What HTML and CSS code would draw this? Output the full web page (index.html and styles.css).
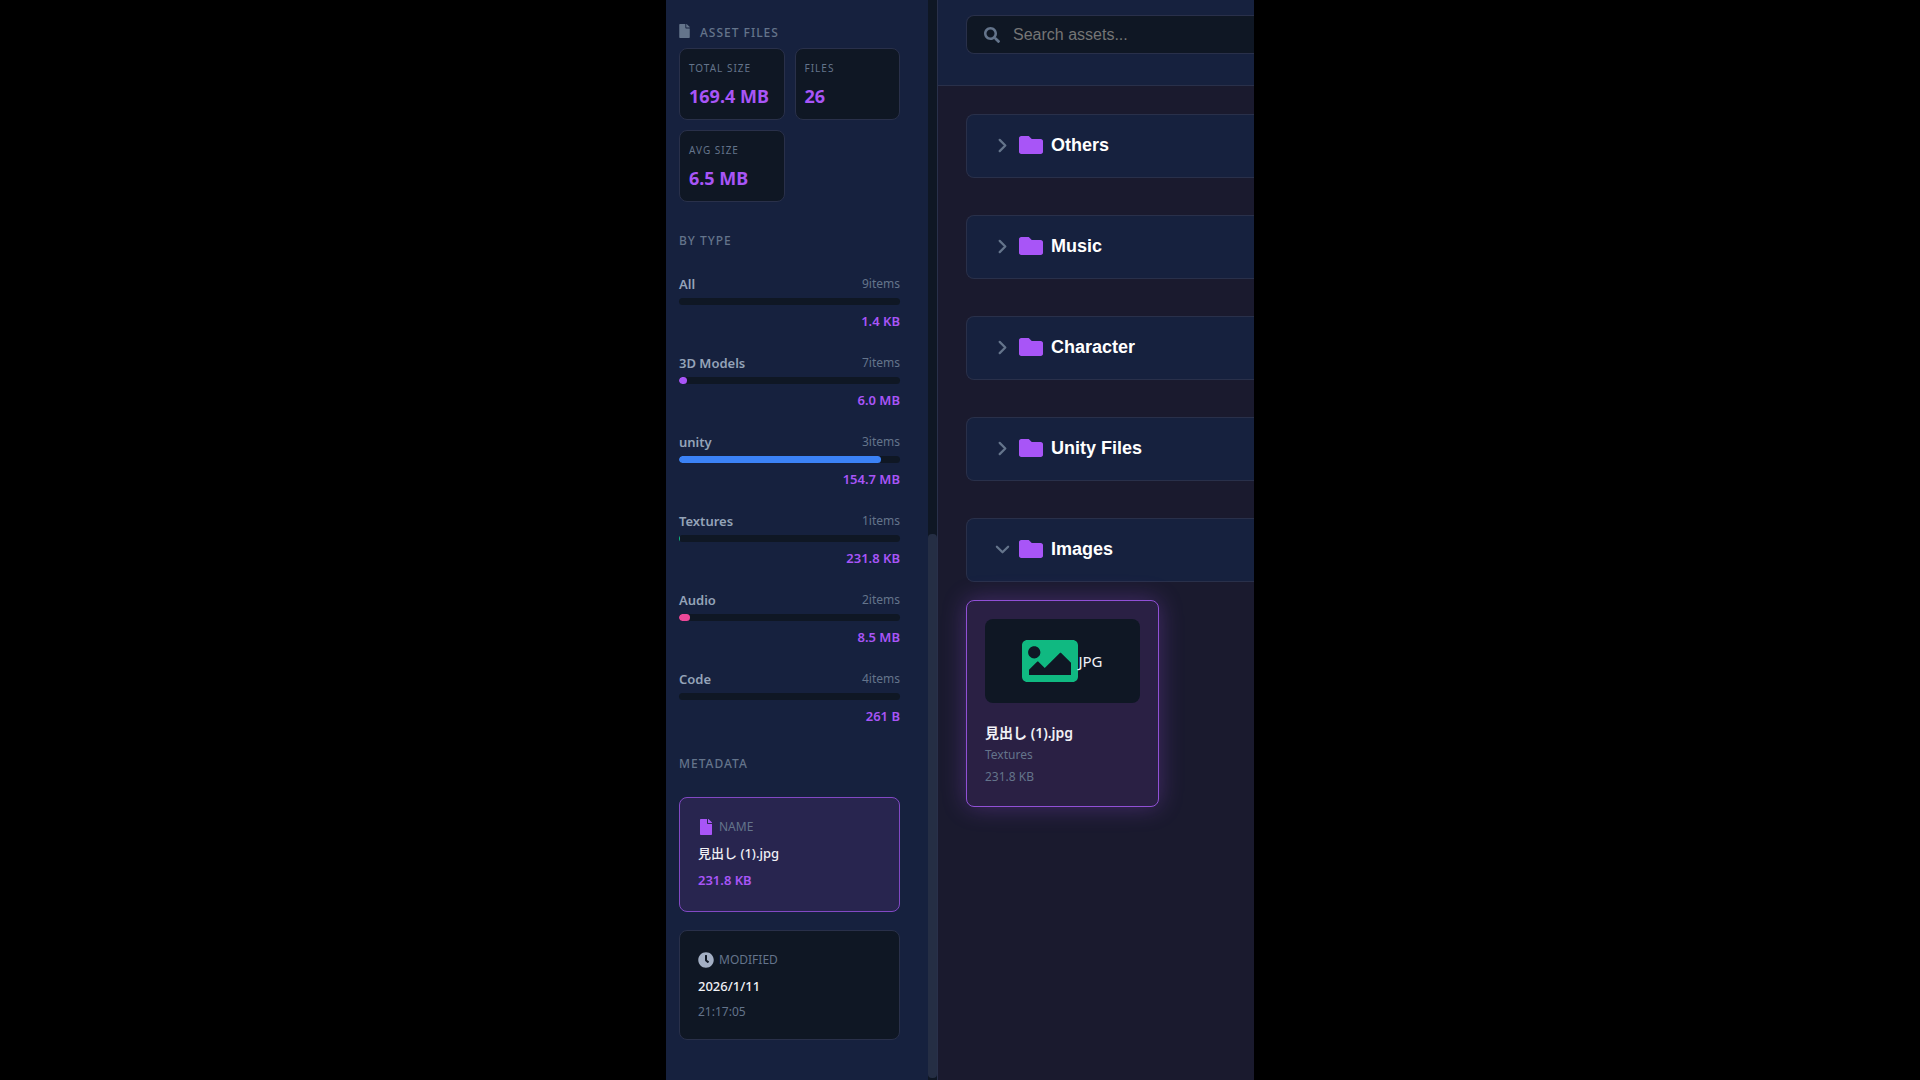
FILE: index.html
```html
<!DOCTYPE html>
<html lang="en">
<head>
<meta charset="utf-8">
<meta name="viewport" content="width=device-width, initial-scale=1">
<title>Asset Library</title>
<link rel="stylesheet" href="styles.css">
</head>
<body>
<svg class="sprite" aria-hidden="true">
  <symbol id="file" viewBox="0 0 384 512"><path d="M224 136V0H24C10.700 0 0 10.700 0 24v464c0 13.300 10.700 24 24 24h336c13.300 0 24-10.700 24-24V160H248c-13.200 0-24-10.800-24-24zm160-14.100v6.100H256V0h6.100c6.400 0 12.500 2.500 17 7l97.900 98c4.500 4.500 7 10.600 7 16.900z"/></symbol>
  <symbol id="clock" viewBox="0 0 512 512"><path d="M256,8C119,8,8,119,8,256S119,504,256,504,504,393,504,256,393,8,256,8Zm92.490,313h0l-20,25a16,16,0,0,1-22.490,2.500h0l-67-49.720a40,40,0,0,1-15-31.230V112a16,16,0,0,1,16-16h32a16,16,0,0,1,16,16V256l58,42.500A16,16,0,0,1,348.490,321Z"/></symbol>
  <symbol id="search" viewBox="0 0 512 512"><path d="M505 442.700L405.300 343c-4.500-4.500-10.600-7-17-7H372c27.600-35.300 44-79.700 44-128C416 93.100 322.900 0 208 0S0 93.100 0 208s93.100 208 208 208c48.300 0 92.700-16.400 128-44v16.300c0 6.400 2.500 12.500 7 17l99.700 99.700c9.400 9.400 24.600 9.400 33.900 0l28.300-28.300c9.400-9.400 9.400-24.600.1-34zM208 336c-70.700 0-128-57.200-128-128 0-70.700 57.200-128 128-128 70.700 0 128 57.200 128 128 0 70.700-57.200 128-128 128z"/></symbol>
  <symbol id="folder" viewBox="0 64 512 384"><path d="M464 128H272l-64-64H48C21.490 64 0 85.490 0 112v288c0 26.510 21.490 48 48 48h416c26.510 0 48-21.490 48-48V176c0-26.510-21.490-48-48-48z"/></symbol>
  <symbol id="image" viewBox="0 64 512 384"><path d="M464 448H48c-26.510 0-48-21.490-48-48V112c0-26.510 21.490-48 48-48h416c26.510 0 48 21.490 48 48v288c0 26.510-21.490 48-48 48zM112 120c-30.928 0-56 25.072-56 56s25.072 56 56 56 56-25.072 56-56-25.072-56-56-56zM64 384h384V272l-87.515-87.515c-4.686-4.686-12.284-4.686-16.971 0L208 320l-55.515-55.515c-4.686-4.686-12.284-4.686-16.971 0L64 336v48z"/></symbol>
  <symbol id="chevron" viewBox="0 0 16 16"><path d="M5 2l6 6-6 6" fill="none" stroke="currentColor" stroke-width="2.400" stroke-linecap="round" stroke-linejoin="round"/></symbol>
</svg>

<div class="app">
  <aside class="sidebar">
    <div class="sidebar-content">
      <h2 class="heading heading-icon"><svg class="icon-file-small"><use href="#file"/></svg>ASSET FILES</h2>
      <dl class="stats">
        <div class="stat"><dt>TOTAL SIZE</dt><dd>169.4 MB</dd></div>
        <div class="stat"><dt>FILES</dt><dd>26</dd></div>
        <div class="stat"><dt>AVG SIZE</dt><dd>6.5 MB</dd></div>
      </dl>

      <h2 class="heading heading-types">BY TYPE</h2>
      <ul class="types">
        <li class="type"><div class="type-row"><span class="type-name">All</span><span class="type-count">9items</span></div><div class="bar"></div><div class="type-size">1.4 KB</div></li>
        <li class="type"><div class="type-row"><span class="type-name">3D Models</span><span class="type-count">7items</span></div><div class="bar"><div class="fill fill-purple" style="width:3.600%"></div></div><div class="type-size">6.0 MB</div></li>
        <li class="type"><div class="type-row"><span class="type-name">unity</span><span class="type-count">3items</span></div><div class="bar"><div class="fill fill-blue" style="width:91.300%"></div></div><div class="type-size">154.7 MB</div></li>
        <li class="type"><div class="type-row"><span class="type-name">Textures</span><span class="type-count">1items</span></div><div class="bar"><div class="fill fill-green" style="width:0.500%"></div></div><div class="type-size">231.8 KB</div></li>
        <li class="type"><div class="type-row"><span class="type-name">Audio</span><span class="type-count">2items</span></div><div class="bar"><div class="fill fill-pink" style="width:5.100%"></div></div><div class="type-size">8.5 MB</div></li>
        <li class="type"><div class="type-row"><span class="type-name">Code</span><span class="type-count">4items</span></div><div class="bar"></div><div class="type-size">261 B</div></li>
      </ul>

      <h2 class="heading heading-meta">METADATA</h2>
      <div class="meta meta-active">
        <div class="meta-label"><svg class="icon-meta icon-purple"><use href="#file"/></svg>NAME</div>
        <div class="meta-value">見出し (1).jpg</div>
        <div class="meta-size">231.8 KB</div>
      </div>
      <div class="meta">
        <div class="meta-label"><svg class="icon-meta"><use href="#clock"/></svg>MODIFIED</div>
        <div class="meta-value">2026/1/11</div>
        <div class="meta-time">21:17:05</div>
      </div>
    </div>
    <div class="scroll-track"><div class="scroll-thumb"></div></div>
  </aside>

  <main class="main">
    <header class="topbar">
      <label class="search">
        <svg class="icon-search"><use href="#search"/></svg>
        <input class="search-input" type="text" placeholder="Search assets..." aria-label="Search assets">
      </label>
    </header>
    <div class="folders">
      <button class="folder" type="button" aria-expanded="false"><svg class="icon-chevron"><use href="#chevron"/></svg><svg class="icon-folder"><use href="#folder"/></svg>Others</button>
      <button class="folder" type="button" aria-expanded="false"><svg class="icon-chevron"><use href="#chevron"/></svg><svg class="icon-folder"><use href="#folder"/></svg>Music</button>
      <button class="folder" type="button" aria-expanded="false"><svg class="icon-chevron"><use href="#chevron"/></svg><svg class="icon-folder"><use href="#folder"/></svg>Character</button>
      <button class="folder" type="button" aria-expanded="false"><svg class="icon-chevron"><use href="#chevron"/></svg><svg class="icon-folder"><use href="#folder"/></svg>Unity Files</button>
      <button class="folder" type="button" aria-expanded="true"><svg class="icon-chevron icon-open"><use href="#chevron"/></svg><svg class="icon-folder"><use href="#folder"/></svg>Images</button>
    </div>
    <div class="assets">
      <article class="asset">
        <div class="preview"><svg class="icon-image"><use href="#image"/></svg>JPG</div>
        <h3 class="asset-name">見出し (1).jpg</h3>
        <div class="asset-info">Textures</div>
        <div class="asset-info">231.8 KB</div>
      </article>
    </div>
  </main>
</div>
</body>
</html>
```
FILE: styles.css
```css
* { box-sizing: border-box; }

body {
  margin: 0;
  background: #000;
  color: #f1f1f6;
  font-family: "Noto Sans", "Noto Sans CJK JP", sans-serif;
}

h2, h3, dl, dd, ul { margin: 0; padding: 0; list-style: none; }

svg { fill: currentColor; flex: none; }
.sprite { display: none; }

.app {
  display: grid;
  grid-template-columns: 272px 1fr;
  max-width: 588px;
  min-height: 100vh;
  margin: 0 auto;
  background: #1a1a2e;
}

/* Sidebar */
.sidebar {
  display: flex;
  background: #16213e;
  border-right: 1px solid #29304a;
}

.sidebar-content { flex: 1; padding: 22px 28px 0 13px; }

.scroll-track {
  display: flex;
  align-items: flex-end;
  width: 9px;
  padding-bottom: 2px;
  background: #0f1724;
}

.scroll-thumb {
  width: 100%;
  height: 50.500%;
  border-radius: 4px;
  background: #252e44;
}

.heading {
  font-size: 12px;
  font-weight: 500;
  line-height: 22px;
  letter-spacing: 1px;
  color: #64748b;
}

.heading-icon { display: flex; gap: 10px; margin-bottom: 4px; }
.icon-file-small { width: 11px; height: 14px; margin-top: 2px; }
.heading-types { margin-top: 28px; }
.heading-meta { margin-top: 26px; }

.stats {
  display: grid;
  grid-template-columns: 1fr 1fr;
  gap: 10px;
}

.stat {
  height: 72px;
  padding: 9px;
  border: 1px solid #29304a;
  border-radius: 8px;
  background: #0f1724;
  white-space: nowrap;
}

.stat dt {
  font-size: 10px;
  line-height: 20px;
  letter-spacing: 1px;
  color: #64748b;
}

.stat dd {
  margin-top: 4px;
  font-size: 18px;
  font-weight: 700;
  line-height: 28px;
  color: #a855f7;
}

.types { display: grid; gap: 21px; margin-top: 22px; }

.type-row {
  display: flex;
  justify-content: space-between;
  align-items: center;
  line-height: 20px;
  margin-bottom: 4px;
}

.type-name { font-size: 13px; font-weight: 600; color: #94a3b8; }
.type-count { font-size: 12px; color: #64748b; }

.bar {
  height: 7px;
  overflow: hidden;
  border-radius: 4px;
  background: #0f1724;
}

.fill { height: 100%; border-radius: 4px; }
.fill-purple { background: #a855f7; }
.fill-blue { background: #3b82f6; }
.fill-green { background: #10b981; }
.fill-pink { background: #ec4899; }

.type-size {
  margin-top: 5px;
  font-size: 13px;
  font-weight: 600;
  line-height: 22px;
  text-align: right;
  color: #a855f7;
}

.meta {
  height: 110px;
  margin-top: 18px;
  padding: 18px;
  border: 1px solid #29304a;
  border-radius: 8px;
  background: #0f1724;
}

.meta-active {
  height: 115px;
  margin-top: 22px;
  border-color: #8249c4;
  background: #28254f;
}

.meta-label {
  display: flex;
  align-items: center;
  gap: 5px;
  font-size: 12px;
  line-height: 22px;
  color: #64748b;
}

.icon-meta { width: 16px; height: 16px; color: #a3afc4; }
.icon-purple { color: #a855f7; }
.meta-value { margin-top: 4px; font-size: 13px; font-weight: 500; line-height: 22px; }
.meta-size { margin-top: 5px; font-size: 13px; font-weight: 600; line-height: 22px; color: #a855f7; }
.meta-time { margin-top: 4px; font-size: 12px; line-height: 22px; color: #64748b; }

/* Main column: the panels run on to its right edge */
.main { min-width: 0; overflow: hidden; }

.topbar {
  padding: 15px 0 31px 28px;
  border-bottom: 1px solid #29304a;
  background: #16213e;
}

.search {
  display: flex;
  align-items: center;
  gap: 13px;
  height: 39px;
  padding-left: 17px;
  border: 1px solid #29304a;
  border-right: 0;
  border-radius: 8px 0 0 8px;
  background: #0f1724;
}

.icon-search { width: 16px; height: 16px; color: #64748b; }

.search-input {
  flex: 1;
  min-width: 0;
  padding: 0;
  border: 0;
  outline: 0;
  background: none;
  color: #f1f1f6;
  font: 16px "Liberation Sans", sans-serif;
}

.search-input::placeholder { color: #757575; }

.folders { display: grid; gap: 37px; padding: 28px 0 0 28px; }

.folder {
  display: flex;
  align-items: center;
  height: 64px;
  padding: 0 0 2px 28px;
  border: 1px solid #29304a;
  border-right: 0;
  border-radius: 8px 0 0 8px;
  background: #16213e;
  color: #fff;
  font: bold 18px "Liberation Sans", sans-serif;
}

.icon-chevron { width: 15px; height: 15px; color: #64748b; }
.icon-open { transform: rotate(90deg); }
.icon-folder { width: 24px; height: 18px; margin: 0 8px 0 9px; color: #a855f7; }

.assets {
  display: grid;
  grid-template-columns: 193px;
  padding: 18px 28px;
}

.asset {
  min-height: 207px;
  padding: 18px;
  border: 1px solid #9150d6;
  border-radius: 8px;
  background: #2a2044;
  box-shadow: 0 0 24px rgba(168, 85, 247, 0.3);
}

.preview {
  display: flex;
  align-items: center;
  justify-content: center;
  height: 84px;
  margin-bottom: 19px;
  border-radius: 8px;
  background: #0f1724;
  font-size: 15px;
}

.icon-image { width: 56px; height: 42px; color: #10b981; }
.asset-name { font-size: 14px; font-weight: 600; line-height: 22px; }
.asset-info { font-size: 12px; line-height: 22px; color: #64748b; }
```
